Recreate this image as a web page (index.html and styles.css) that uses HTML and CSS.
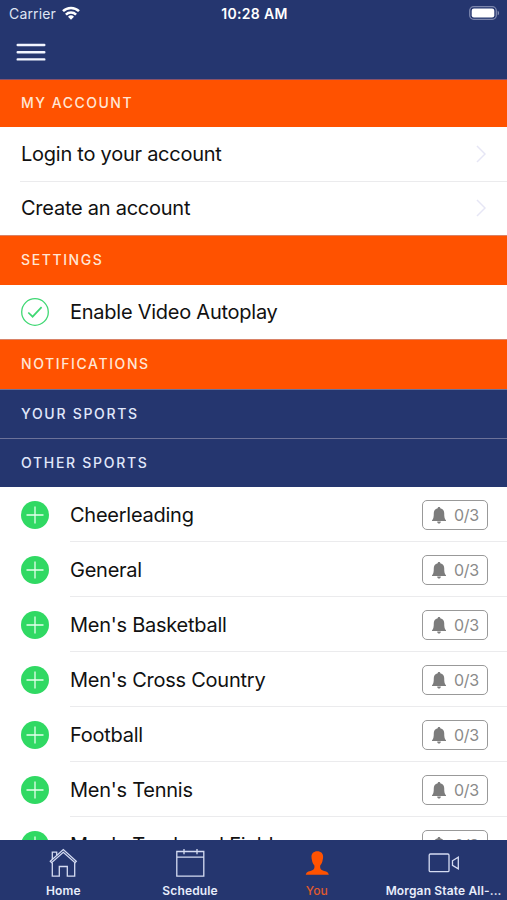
FILE: index.html
```html
<!DOCTYPE html>
<html lang="en">

<head>
  <meta charset="UTF-8">
  <meta name="viewport" content="width=device-width, initial-scale=1.0">
  <title>My Account</title>
  <link rel="stylesheet" href="styles.css">
</head>

<body>

  <svg class="symbols" width="0" height="0">
    <symbol id="plus" viewBox="0 0 28 28">
      <circle cx="14" cy="14" r="14" fill="#30d963"/>
      <path d="M5.500 14h17M14 5.500v17" stroke="#e4ffec" stroke-width="1.300" fill="none"/>
    </symbol>
    <symbol id="bell" viewBox="0 0 14 17">
      <path d="M7 0c.8 0 1.300.5 1.300 1.200C11 1.800 12.200 3.700 12.200 6c0 4.200.4 6 1.800 7.300V14H0v-.7C1.400 12 1.800 10.200 1.800 6c0-2.300 1.200-4.200 3.900-4.800C5.700.5 6.200 0 7 0zM5.200 14.400h3.600c0 1.300-.8 2.100-1.800 2.100s-1.800-.8-1.800-2.100z" fill="#7c7c7c"/>
    </symbol>
    <symbol id="chevron" viewBox="0 0 10 18">
      <path d="M1 1l8 8-8 8" stroke="#e6e6f5" stroke-width="1.500" fill="none"/>
    </symbol>
  </svg>

  <header>
    <div class="status-bar">
      <div class="carrier">
        Carrier
        <svg width="18" height="14" viewBox="0 0 18 14" fill="none" stroke="#fff" stroke-width="2.500">
          <path d="M1 5.200a11.300 11.300 0 0 1 16 0M3.900 8.600a7.200 7.200 0 0 1 10.200 0"/>
          <path d="M9 13.800l-3-3a4.300 4.300 0 0 1 6 0z" fill="#fff" stroke="none"/>
        </svg>
      </div>
      <div class="time">10:28 AM</div>
      <div class="battery">
        <svg width="31" height="14" viewBox="0 0 31 14">
          <rect x=".7" y=".7" width="26.600" height="12.600" rx="4" fill="none" stroke="#7c86ad" stroke-width="1.300"/>
          <rect x="2.700" y="2.500" width="22.600" height="9" rx="2.200" fill="#fff"/>
          <path d="M28.700 4.700c1.700.7 1.700 3.900 0 4.600z" fill="#8d96b8"/>
        </svg>
      </div>
    </div>
    <button class="menu" aria-label="Menu">
      <svg width="30" height="19" viewBox="0 0 30 19" stroke="#f2f5ff" stroke-width="2.400" stroke-linecap="round">
        <path d="M1.700 2h26.600M1.700 9.200h26.600M1.700 16.400h26.600"/>
      </svg>
    </button>
  </header>

  <main>
    <h2 class="account-title">My Account</h2>
    <ul class="links">
      <li><a href="#">Login to your account</a><svg width="10" height="18"><use href="#chevron"/></svg></li>
      <li><a href="#">Create an account</a><svg width="10" height="18"><use href="#chevron"/></svg></li>
    </ul>

    <h2>Settings</h2>
    <div class="setting">
      <svg width="28" height="28" viewBox="0 0 28 28" fill="none" stroke="#3fd873">
        <circle cx="14" cy="14" r="13.300" stroke-width="1.300"/>
        <path d="M7.300 14.500l4.300 4.200 9-9.500" stroke-width="1.700"/>
      </svg>
      <span class="autoplay">Enable Video Autoplay</span>
    </div>

    <h2>Notifications</h2>
    <h3>Your Sports</h3>
    <h3>Other Sports</h3>
    <ul class="sports">
      <li>
        <svg width="28" height="28"><use href="#plus"/></svg>
        <div class="sport"><span>Cheerleading</span><button class="alerts"><svg width="14" height="17"><use href="#bell"/></svg>0/3</button></div>
      </li>
      <li>
        <svg width="28" height="28"><use href="#plus"/></svg>
        <div class="sport"><span>General</span><button class="alerts"><svg width="14" height="17"><use href="#bell"/></svg>0/3</button></div>
      </li>
      <li>
        <svg width="28" height="28"><use href="#plus"/></svg>
        <div class="sport"><span>Men's Basketball</span><button class="alerts"><svg width="14" height="17"><use href="#bell"/></svg>0/3</button></div>
      </li>
      <li>
        <svg width="28" height="28"><use href="#plus"/></svg>
        <div class="sport"><span>Men's Cross Country</span><button class="alerts"><svg width="14" height="17"><use href="#bell"/></svg>0/3</button></div>
      </li>
      <li>
        <svg width="28" height="28"><use href="#plus"/></svg>
        <div class="sport"><span>Football</span><button class="alerts"><svg width="14" height="17"><use href="#bell"/></svg>0/3</button></div>
      </li>
      <li>
        <svg width="28" height="28"><use href="#plus"/></svg>
        <div class="sport"><span>Men's Tennis</span><button class="alerts"><svg width="14" height="17"><use href="#bell"/></svg>0/3</button></div>
      </li>
      <li>
        <svg width="28" height="28"><use href="#plus"/></svg>
        <div class="sport"><span>Men's Track and Field</span><button class="alerts"><svg width="14" height="17"><use href="#bell"/></svg>0/3</button></div>
      </li>
    </ul>
  </main>

  <nav>
    <a href="#">
      <svg width="30" height="30" viewBox="0 0 30 30" fill="none" stroke="#d5dcf2" stroke-width="1.300">
        <path d="M2.300 13.300L15.300 1.600l13 11.700-1.300 1.400L15.300 4.300 3.600 14.700z"/>
        <path d="M4.300 14.500v13.700h7V18.500h8v9.700h7.400V14.500M11.500 18.500h8M4.300 11.200V4.200h4.400v3"/>
      </svg>
      <span>Home</span>
    </a>
    <a href="#">
      <svg width="30" height="30" viewBox="0 0 30 30" fill="none" stroke="#d5dcf2" stroke-width="1.300">
        <path d="M1.800 3.500h27v24.700h-27zM1.800 9.200h27M9 1v5.200M22 1v5.200"/>
      </svg>
      <span>Schedule</span>
    </a>
    <a href="#" class="active">
      <svg width="30" height="30" viewBox="0 0 30 30">
        <path d="M15.300 3.200c3.700 0 6 2.200 5.800 5.800 0 1.200-.2 1.900-.4 2.700-.3 2.600-1.200 4.200-2.400 5.500-.6 2.800.1 4.300 2.600 5.200 3.300 1.100 5.700 1.500 5.900 4.400h-23c.2-2.900 2.600-3.300 5.900-4.400 2.500-.9 3.200-2.400 2.600-5.200-1.200-1.300-2.100-2.900-2.400-5.500-.2-.8-.4-1.500-.4-2.700C9.300 5.400 11.600 3.200 15.300 3.200z" fill="#ff5200"/>
      </svg>
      <span>You</span>
    </a>
    <a href="#">
      <svg width="32" height="30" viewBox="0 0 32 30" fill="none" stroke="#d5dcf2" stroke-width="1.300">
        <rect x="1.200" y="6" width="19.800" height="17.700" rx="1.200"/>
        <path d="M24.500 12.700l5.800-3.500v11.600l-5.800-3.500z"/>
      </svg>
      <span>Morgan State All-...</span>
    </a>
  </nav>

</body>

</html>
```
FILE: styles.css
```css
* {
  box-sizing: border-box;
}
body {
  font-family: Inter, "Liberation Sans", sans-serif;
  background-color: #fff;
  color: #111;
  margin: 0;
  height: 900px;
  display: flex;
  flex-direction: column;
  overflow: hidden;
}
svg {
  display: block;
  flex-shrink: 0;
}
.symbols {
  display: none;
}
ul {
  list-style: none;
  margin: 0;
  padding: 0;
}
a {
  color: inherit;
  text-decoration: none;
}
header {
  height: 79px;
  flex-shrink: 0;
  background-color: #25366f;
  color: #fff;
}
.status-bar {
  display: grid;
  grid-template-columns: 1fr auto 1fr;
  align-items: center;
  height: 27px;
  padding: 0 7px 0 9px;
  font-size: 14px;
}
.carrier {
  display: flex;
  align-items: center;
  gap: 6px;
  color: #dfe4f3;
  letter-spacing: 0.15px;
}
.carrier svg {
  margin-top: -2px;
}
.time {
  font-weight: 600;
  letter-spacing: 0.35px;
}
.battery {
  justify-self: end;
  margin-top: -1px;
}
.menu {
  display: block;
  margin: 16px 0 0 16px;
  padding: 0;
  border: none;
  background: none;
}
main {
  flex: 1;
  min-height: 0;
  overflow: hidden;
}
h2, h3 {
  display: flex;
  align-items: center;
  margin: 0;
  padding: 0 0 2px 21px;
  font-size: 14px;
  font-weight: 500;
  letter-spacing: 1.6px;
  text-transform: uppercase;
}
h2 {
  height: 50px;
  background-color: #ff5200;
  color: #ffe6d5;
  border-top: 1px solid #d98267;
}
.account-title {
  height: 48px;
  border-top-color: #88526b;
  letter-spacing: 1.5px;
}
h3 {
  height: 49px;
  background-color: #25366f;
  color: #e1e8fb;
  border-top: 1px solid #6c7299;
  letter-spacing: 1.7px;
}
.links, .setting, .sports {
  font-size: 20px;
  letter-spacing: -0.25px;
}
.links li {
  display: flex;
  align-items: center;
  justify-content: space-between;
  height: 54px;
  margin-left: 20px;
  padding: 0 21px 0 1px;
}
.links li + li {
  padding-bottom: 2px;
  border-top: 1px solid #ebebed;
}
.setting {
  display: flex;
  align-items: center;
  gap: 21px;
  height: 54px;
  padding-left: 21px;
}
.sports li {
  display: flex;
  align-items: center;
  gap: 21px;
  height: 55px;
  padding-left: 21px;
}
.sport {
  flex: 1;
  display: flex;
  align-items: center;
  justify-content: space-between;
  height: 55px;
  padding: 2px 19px 0 0;
  border-bottom: 1px solid #ebebed;
}
.alerts {
  display: flex;
  align-items: center;
  gap: 8px;
  width: 66px;
  height: 30px;
  padding: 0 0 0 9px;
  border: 1.5px solid #999;
  border-radius: 5px;
  background-color: #fff;
  color: #8a8a8a;
  font: 16px Inter, "Liberation Sans", sans-serif;
  letter-spacing: -0.3px;
}
nav {
  display: grid;
  grid-template-columns: repeat(4, 1fr);
  height: 60px;
  flex-shrink: 0;
  background-color: #25366f;
  color: #e8edfb;
}
nav a {
  display: flex;
  flex-direction: column;
  align-items: center;
  min-width: 0;
  padding-top: 8px;
  font-size: 12px;
  font-weight: 600;
  line-height: 14px;
  letter-spacing: 0.15px;
  white-space: nowrap;
}
nav span {
  margin-top: 6px;
}
nav .active {
  color: #e05a2c;
  font-weight: 500;
}
```
